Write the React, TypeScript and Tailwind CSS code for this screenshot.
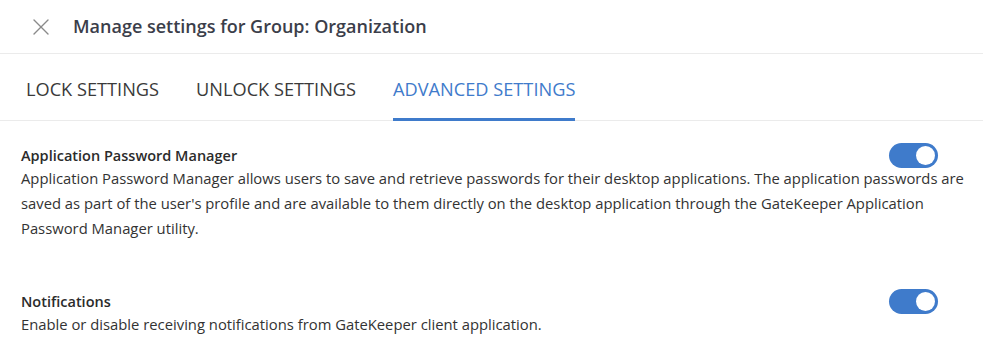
import { X } from "lucide-react";

const font = { fontFamily: '"Open Sans", "Noto Sans", sans-serif' };

function Toggle() {
  return (
    <div className="relative h-[25px] w-[49px] shrink-0 rounded-full bg-[#3f7bcb]">
      <div className="absolute right-[3px] top-[3px] h-[19px] w-[19px] rounded-full bg-white" />
    </div>
  );
}

function Setting({ title, desc }: { title: string; desc: string }) {
  return (
    <div>
      <div className="flex items-center justify-between pr-[31px]">
        <div className="text-[14.5px] font-semibold text-[#2b2b2b]">{title}</div>
        <Toggle />
      </div>
      <p className="-mt-[2px] text-[14.8px] leading-[25px] text-[#333]">{desc}</p>
    </div>
  );
}

export default function App() {
  return (
    <div className="w-[983px] h-[358px] bg-white overflow-hidden" style={font}>
      <div className="flex h-[54px] items-center border-b border-[#ebebeb] pl-[27px]">
        <X size={28} strokeWidth={1.2} className="text-[#8a8a8a]" />
        <div className="ml-[18px] text-[18px] font-semibold text-[#3b3e4a]">
          Manage settings for Group: Organization
        </div>
      </div>
      <div className="flex h-[67px] items-stretch gap-[37px] border-b border-[#ebebeb] pl-[26px]">
        <div className="flex items-center pt-[5px] text-[18.2px] text-[#3a3a3a]">LOCK SETTINGS</div>
        <div className="flex items-center pt-[5px] text-[18.2px] text-[#3a3a3a]">UNLOCK SETTINGS</div>
        <div className="-mb-px flex items-center border-b-[3px] border-[#3f7bcb] pt-[8px] text-[18.2px] text-[#3f7bcb]">
          ADVANCED SETTINGS
        </div>
      </div>
      <div className="pl-[21px] pr-[14px] pt-[22px]">
        <Setting
          title="Application Password Manager"
          desc="Application Password Manager allows users to save and retrieve passwords for their desktop applications. The application passwords are saved as part of the user's profile and are available to them directly on the desktop application through the GateKeeper Application Password Manager utility."
        />
        <div className="h-[48px]" />
        <Setting
          title="Notifications"
          desc="Enable or disable receiving notifications from GateKeeper client application."
        />
      </div>
    </div>
  );
}
